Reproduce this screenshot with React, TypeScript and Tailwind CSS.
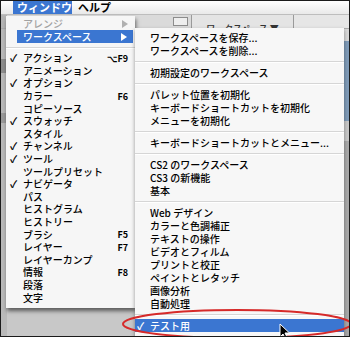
import React from "react";

type Item =
  | { sep: true }
  | { label: string; check?: boolean; key?: string; arrow?: boolean; dim?: boolean; active?: boolean };

const leftItems: Item[] = [
  { label: "アレンジ", dim: true, arrow: true },
  { label: "ワークスペース", arrow: true, active: true },
  { sep: true },
  { label: "アクション", check: true, key: "⌥F9" },
  { label: "アニメーション" },
  { label: "オプション", check: true },
  { label: "カラー", key: "F6" },
  { label: "コピーソース" },
  { label: "スウォッチ", check: true },
  { label: "スタイル" },
  { label: "チャンネル", check: true },
  { label: "ツール", check: true },
  { label: "ツールプリセット" },
  { label: "ナビゲータ", check: true },
  { label: "パス" },
  { label: "ヒストグラム" },
  { label: "ヒストリー" },
  { label: "ブラシ", key: "F5" },
  { label: "レイヤー", key: "F7" },
  { label: "レイヤーカンプ" },
  { label: "情報", key: "F8" },
  { label: "段落" },
  { label: "文字" },
];

const subItems: Item[] = [
  { label: "ワークスペースを保存..." },
  { label: "ワークスペースを削除..." },
  { sep: true },
  { label: "初期設定のワークスペース" },
  { sep: true },
  { label: "パレット位置を初期化" },
  { label: "キーボードショートカットを初期化" },
  { label: "メニューを初期化" },
  { sep: true },
  { label: "キーボードショートカットとメニュー..." },
  { sep: true },
  { label: "CS2 のワークスペース" },
  { label: "CS3 の新機能" },
  { label: "基本" },
  { sep: true },
  { label: "Web デザイン" },
  { label: "カラーと色調補正" },
  { label: "テキストの操作" },
  { label: "ビデオとフィルム" },
  { label: "プリントと校正" },
  { label: "ペイントとレタッチ" },
  { label: "画像分析" },
  { label: "自動処理" },
  { sep: true },
  { label: "テスト用", check: true, active: true },
];

function Separator() {
  return (
    <div className="h-[9px] flex flex-col justify-center">
      <div className="h-px bg-[#d6d6d6]" />
      <div className="h-px bg-white" />
    </div>
  );
}

function Arrow({ color }: { color: string }) {
  return (
    <svg width="6" height="8" viewBox="0 0 6 8" className="shrink-0">
      <path d="M0 0 L6 4 L0 8 Z" fill={color} />
    </svg>
  );
}

function LeftMenu() {
  return (
    <div className="absolute left-[5px] top-[15px] w-[129px] bg-[#f6f6f6] pt-px pb-[4px] shadow-[1px_3px_4px_rgba(0,0,0,0.55)]">
      {leftItems.map((it, i) => {
        if ("sep" in it) return <Separator key={i} />;
        if (it.active)
          return (
            <div key={i} className="h-[13px] ml-[11px] mr-[2px] bg-[#3b76d1] flex items-center pl-[6px] pr-[6px] text-white">
              <span className="flex-1 leading-none">{it.label}</span>
              <Arrow color="#ffffff" />
            </div>
          );
        return (
          <div
            key={i}
            className={`${it.dim ? "h-[13px] text-[#a2a2a2]" : "h-[12.6px] text-black"} flex items-center pr-[7px]`}
          >
            <span className="w-[17px] pl-[4px] text-[10px] font-bold leading-none">{it.check ? "✓" : ""}</span>
            <span className="flex-1 leading-none">{it.label}</span>
            {it.key && <span className="text-[9px] font-bold leading-none">{it.key}</span>}
            {it.arrow && <Arrow color="#b0b0b0" />}
          </div>
        );
      })}
    </div>
  );
}

function SubMenu() {
  return (
    <div className="absolute left-[134px] top-[27px] w-[209px] h-[320px] bg-[#f7f7f7] pt-[3px] shadow-[0_2px_4px_rgba(0,0,0,0.4)]">
      {subItems.map((it, i) => {
        if ("sep" in it) return <Separator key={i} />;
        return (
          <div
            key={i}
            className={`h-[13px] flex items-center ${it.active ? "bg-[#3b76d1] text-white" : "text-black"}`}
          >
            <span className="w-[15px] pl-[2px] text-[10px] font-bold leading-none">{it.check ? "✓" : ""}</span>
            <span className="leading-none">{it.label}</span>
          </div>
        );
      })}
    </div>
  );
}

function Cursor() {
  return (
    <svg className="absolute left-[278px] top-[322px]" width="12" height="17" viewBox="0 0 12 17">
      <path d="M1 1 L1 14 L4 11 L6.5 16 L8.5 15 L6 10 L10.5 10 Z" fill="#000" stroke="#fff" strokeWidth="1" />
    </svg>
  );
}

export default function App() {
  return (
    <div className="relative w-[350px] h-[337px] overflow-hidden border border-[#1b1b1b] bg-[#c8c8c8] text-[10px] font-medium font-['Noto_Sans_CJK_JP',sans-serif]">
      {/* menu bar */}
      <div className="h-[14px] flex items-stretch bg-gradient-to-b from-white to-[#e9e9e9] border-b border-[#bdbdbd] text-[11px] font-bold">
        <div className="ml-[12px] w-[59px] bg-[#3b76d1] text-white flex items-center pl-[4px] leading-none">ウィンドウ</div>
        <div className="ml-[6px] flex items-center leading-none text-black">ヘルプ</div>
      </div>

      {/* options bar behind the menus */}
      <div className="h-[14px] flex items-stretch bg-[#dadada] border-b border-[#a9a9a9]">
        <div className="w-[6px] bg-[#b5b5b5]" />
        <div className="flex-1" />
        <div className="w-[15px] my-[2px] mr-[3px] border border-[#8c8c8c] bg-[#eeeeee]" />
        <div className="w-[103px] border-l border-r border-[#9a9a9a] bg-[#e4e4e4] flex items-end justify-center text-[9px] leading-none text-[#333] overflow-hidden">
          <span className="translate-y-[5px]">ワークスペース ▼</span>
        </div>
        <div className="w-[55px] bg-[#e6e6e6]" />
      </div>

      {/* desktop strip at the left and right */}
      <div className="flex h-[308px]">
        <div className="w-[6px] flex flex-col bg-[#b9b9b9]">
          <div className="h-[30px]" />
          <div className="h-[14px] bg-[#8d8d8d]" />
          <div className="h-[40px]" />
          <div className="h-[10px] bg-[#9a9a9a]" />
        </div>
        <div className="flex-1" />
        <div className="w-[6px] flex flex-col bg-[#a9a9a9]">
          <div className="h-[12px] bg-[#d8d8d8]" />
          <div className="h-[80px] bg-[#7f9bb8]" />
          <div className="h-[20px] bg-[#c7c7c7]" />
        </div>
      </div>

      <LeftMenu />
      <SubMenu />

      <svg className="absolute left-0 top-0 pointer-events-none" width="350" height="337">
        <ellipse cx="236" cy="323" rx="114" ry="14" fill="none" stroke="#d62a2a" strokeWidth="2" />
      </svg>
      <Cursor />
    </div>
  );
}
